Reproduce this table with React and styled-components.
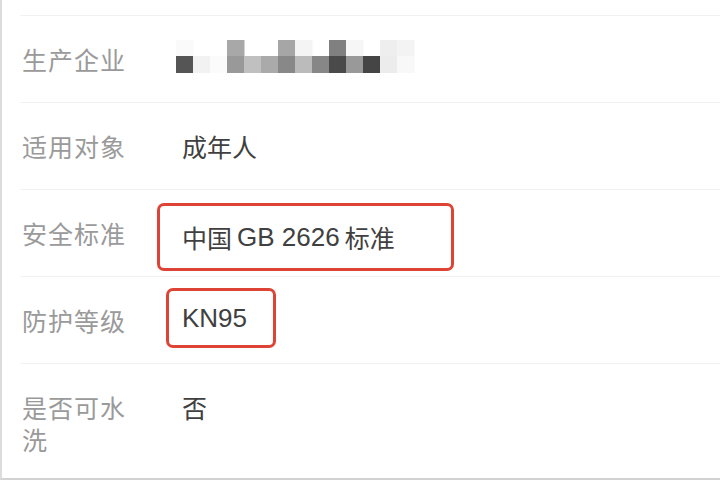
import React from 'react'
import styled, { createGlobalStyle } from 'styled-components'

const GlobalStyle = createGlobalStyle`
  html, body {
    margin: 0;
    padding: 0;
    background: #ffffff;
  }
  body {
    font-family: "Noto Sans CJK SC", "Liberation Sans", sans-serif;
  }
`

const Page = styled.div`
  width: 720px;
  height: 480px;
  box-sizing: border-box;
  overflow: hidden;
  border-left: 2px solid #dcdcdc;
  border-bottom: 2px solid #d2d2d2;
  background: #fff;
  padding-top: 15px;
`

const List = styled.div`
  margin-left: 18px;
  border-top: 1px solid #f1f1f1;
`

const Row = styled.div`
  display: grid;
  grid-template-columns: 112px 1fr;
  column-gap: 48px;
  align-items: start;
  padding: 27px 0 27px 2px;
  border-bottom: ${p => (p.last ? 'none' : '1px solid #f1f1f1')};
  min-height: 32px;
`

const Label = styled.div`
  font-size: 25px;
  line-height: 32px;
  color: #9a9a9a;
  letter-spacing: 1px;
`

const Value = styled.div`
  font-size: 25px;
  line-height: 32px;
  color: #404040;
  display: flex;
  align-items: center;
  height: 32px;
`

const Marked = styled.span`
  display: inline-flex;
  align-items: center;
  flex-shrink: 0;
  box-sizing: border-box;
  height: ${p => p.h}px;
  margin-left: ${p => p.ml}px;
  margin-top: ${p => p.mt || 0}px;
  padding: ${p => p.pb || 0}px ${p => p.pr}px 0 ${p => p.pl}px;
  border: 3px solid #de4436;
  border-radius: 7px;
  font-family: "Liberation Sans", "Noto Sans CJK SC", sans-serif;
  font-size: 26px;
  color: #404040;
  white-space: nowrap;
`

const Cjk = styled.span`
  font-family: "Noto Sans CJK SC", sans-serif;
  font-size: 25px;
`

const Latin = styled.span`
  font-family: "Liberation Sans", sans-serif;
  font-size: 26px;
  margin: 0 ${p => p.m || 0}px;
`

const MosaicSvg = styled.svg`
  display: block;
  margin-left: -6px;
  margin-top: -4px;
`

const top = [
  [0, '#fafafa'], [3, '#a8a8a8'], [6, '#a6a6a6'], [7, '#f4f4f4'],
  [9, '#808080'], [10, '#f6f6f6'], [12, '#eeeeee'], [13, '#f3f3f3'],
]
const bottom = [
  '#555555', '#f2f2f2', '#fbfbfb', '#999999', '#c0c0c0', '#aaaaaa', '#888888',
  '#bbbbbb', '#878787', '#4a4a4a', '#999999', '#454545', '#ececec', '#f8f8f8',
]

function Mosaic() {
  return (
    <MosaicSvg width="260" height="34" viewBox="0 0 260 34">
      {top.map(([i, c]) => (
        <rect key={'t' + i} x={i * 17} y="0" width="17.5" height="16.5" fill={c} />
      ))}
      {bottom.map((c, i) => (
        <rect key={'b' + i} x={i * 17} y="16" width="17.5" height="17" fill={c} />
      ))}
    </MosaicSvg>
  )
}

export default function App() {
  return (
    <Page>
      <GlobalStyle />
      <List>
        <Row>
          <Label>生产企业</Label>
          <Value><Mosaic /></Value>
        </Row>
        <Row>
          <Label>适用对象</Label>
          <Value>成年人</Value>
        </Row>
        <Row>
          <Label>安全标准</Label>
          <Value>
            <Marked h={68} ml={-25} mt={8} pl={22} pr={56}>
              <Cjk>中国</Cjk><Latin m={5}>GB 2626</Latin><Cjk>标准</Cjk>
            </Marked>
          </Value>
        </Row>
        <Row>
          <Label>防护等级</Label>
          <Value>
            <Marked h={60} ml={-16} mt={-4} pl={13} pr={26}>KN95</Marked>
          </Value>
        </Row>
        <Row last>
          <Label>是否可水洗</Label>
          <Value>否</Value>
        </Row>
      </List>
    </Page>
  )
}
